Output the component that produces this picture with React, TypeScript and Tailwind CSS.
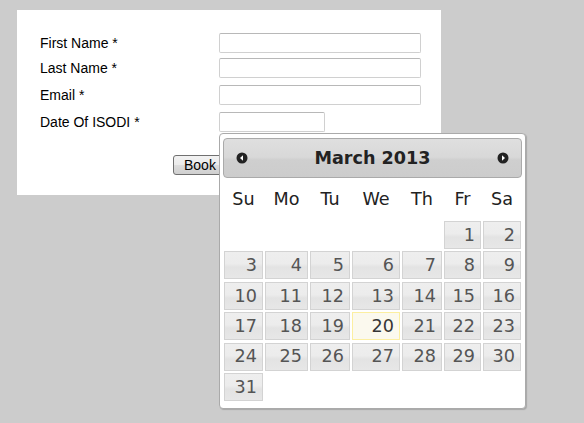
import type { FC } from 'react';

const fields = [
  { label: 'First Name *', width: 'w-[202px]', gap: 'mt-0' },
  { label: 'Last Name *', width: 'w-[202px]', gap: 'mt-[5px]' },
  { label: 'Email *', width: 'w-[202px]', gap: 'mt-[7px]' },
  { label: 'Date Of ISODI *', width: 'w-[106px]', gap: 'mt-[7px]' },
];

const dayNames = ['Su', 'Mo', 'Tu', 'We', 'Th', 'Fr', 'Sa'];

// first of March 2013 is a Friday
const days: (number | null)[] = [
  null, null, null, null, null,
  ...Array.from({ length: 31 }, (_, i) => i + 1),
];

const NavIcon: FC<{ dir: 'prev' | 'next' }> = ({ dir }) => (
  <svg width="12" height="12" viewBox="0 0 12 12">
    <circle cx="6" cy="6" r="5.5" fill="#222" />
    {dir === 'prev' ? (
      <polygon points="7,3.2 7,8.8 4,6" fill="#fff" />
    ) : (
      <polygon points="5,3.2 5,8.8 8,6" fill="#fff" />
    )}
  </svg>
);

const DatePicker: FC = () => (
  <div className="absolute left-[219px] top-[133px] w-[307px] h-[276px] bg-white border border-[#aaaaaa] rounded-[4px] shadow-[1px_1px_1px_rgba(0,0,0,0.18)] px-[3px] pt-[4px] font-['DejaVu_Sans',Verdana,sans-serif] text-[17.6px]">
    <div className="h-[40px] flex items-center justify-between px-[12px] border border-[#aaaaaa] rounded-[4px] bg-[linear-gradient(to_bottom,#dfdfdf_0%,#d8d8d8_48%,#cfcfcf_55%,#cccccc_100%)]">
      <NavIcon dir="prev" />
      <span className="font-bold text-[#222222]">March 2013</span>
      <NavIcon dir="next" />
    </div>

    <div className="ml-[1px] grid grid-cols-[39px_43px_40px_48px_40px_37px_38px] gap-x-[2px]">
      {dayNames.map((d) => (
        <div key={d} className="h-[43px] flex items-center justify-center text-[#222222]">
          {d}
        </div>
      ))}
    </div>

    <div className="ml-[1px] grid grid-cols-[39px_43px_40px_48px_40px_37px_38px] auto-rows-[28px] gap-x-[2px] gap-y-[2.4px]">
      {days.map((d, i) =>
        d === null ? (
          <div key={`e${i}`} />
        ) : d === 20 ? (
          <div
            key={d}
            className="flex items-center justify-end pr-[5px] border border-[#fcefa1] bg-[#fbf9ee] text-[#363636]"
          >
            {d}
          </div>
        ) : (
          <div
            key={d}
            className="flex items-center justify-end pr-[5px] border border-[#d3d3d3] text-[#555555] bg-[linear-gradient(to_bottom,#eeeeee_0%,#ececec_45%,#e3e3e3_58%,#e7e7e7_100%)]"
          >
            {d}
          </div>
        ),
      )}
    </div>
  </div>
);

export default function App() {
  return (
    <div className="relative min-h-[423px] bg-[#cccccc] pt-[10px] pl-[17px] font-['Liberation_Sans',Arial,sans-serif]">
      <div className="relative w-[424px] h-[185px] bg-white pt-[23px]">
        {fields.map((f) => (
          <div key={f.label} className={`flex items-center ${f.gap}`}>
            <label className="w-[202px] pl-[23px] text-[14px] text-black leading-none">
              {f.label}
            </label>
            <input
              type="text"
              className={`${f.width} h-[20px] border border-[#d0d0d0] border-t-[#b8b8b8] rounded-[2px] bg-white outline-none`}
            />
          </div>
        ))}
        <div className="mt-[21px] pl-[156px]">
          <button
            type="button"
            className="h-[20px] px-[10px] text-[14px] leading-none text-black border border-[#707070] rounded-[3px] bg-[linear-gradient(to_bottom,#f2f2f2_0%,#ebebeb_50%,#dddddd_51%,#cfcfcf_100%)]"
          >
            Book Now
          </button>
        </div>
      </div>
      <DatePicker />
    </div>
  );
}
